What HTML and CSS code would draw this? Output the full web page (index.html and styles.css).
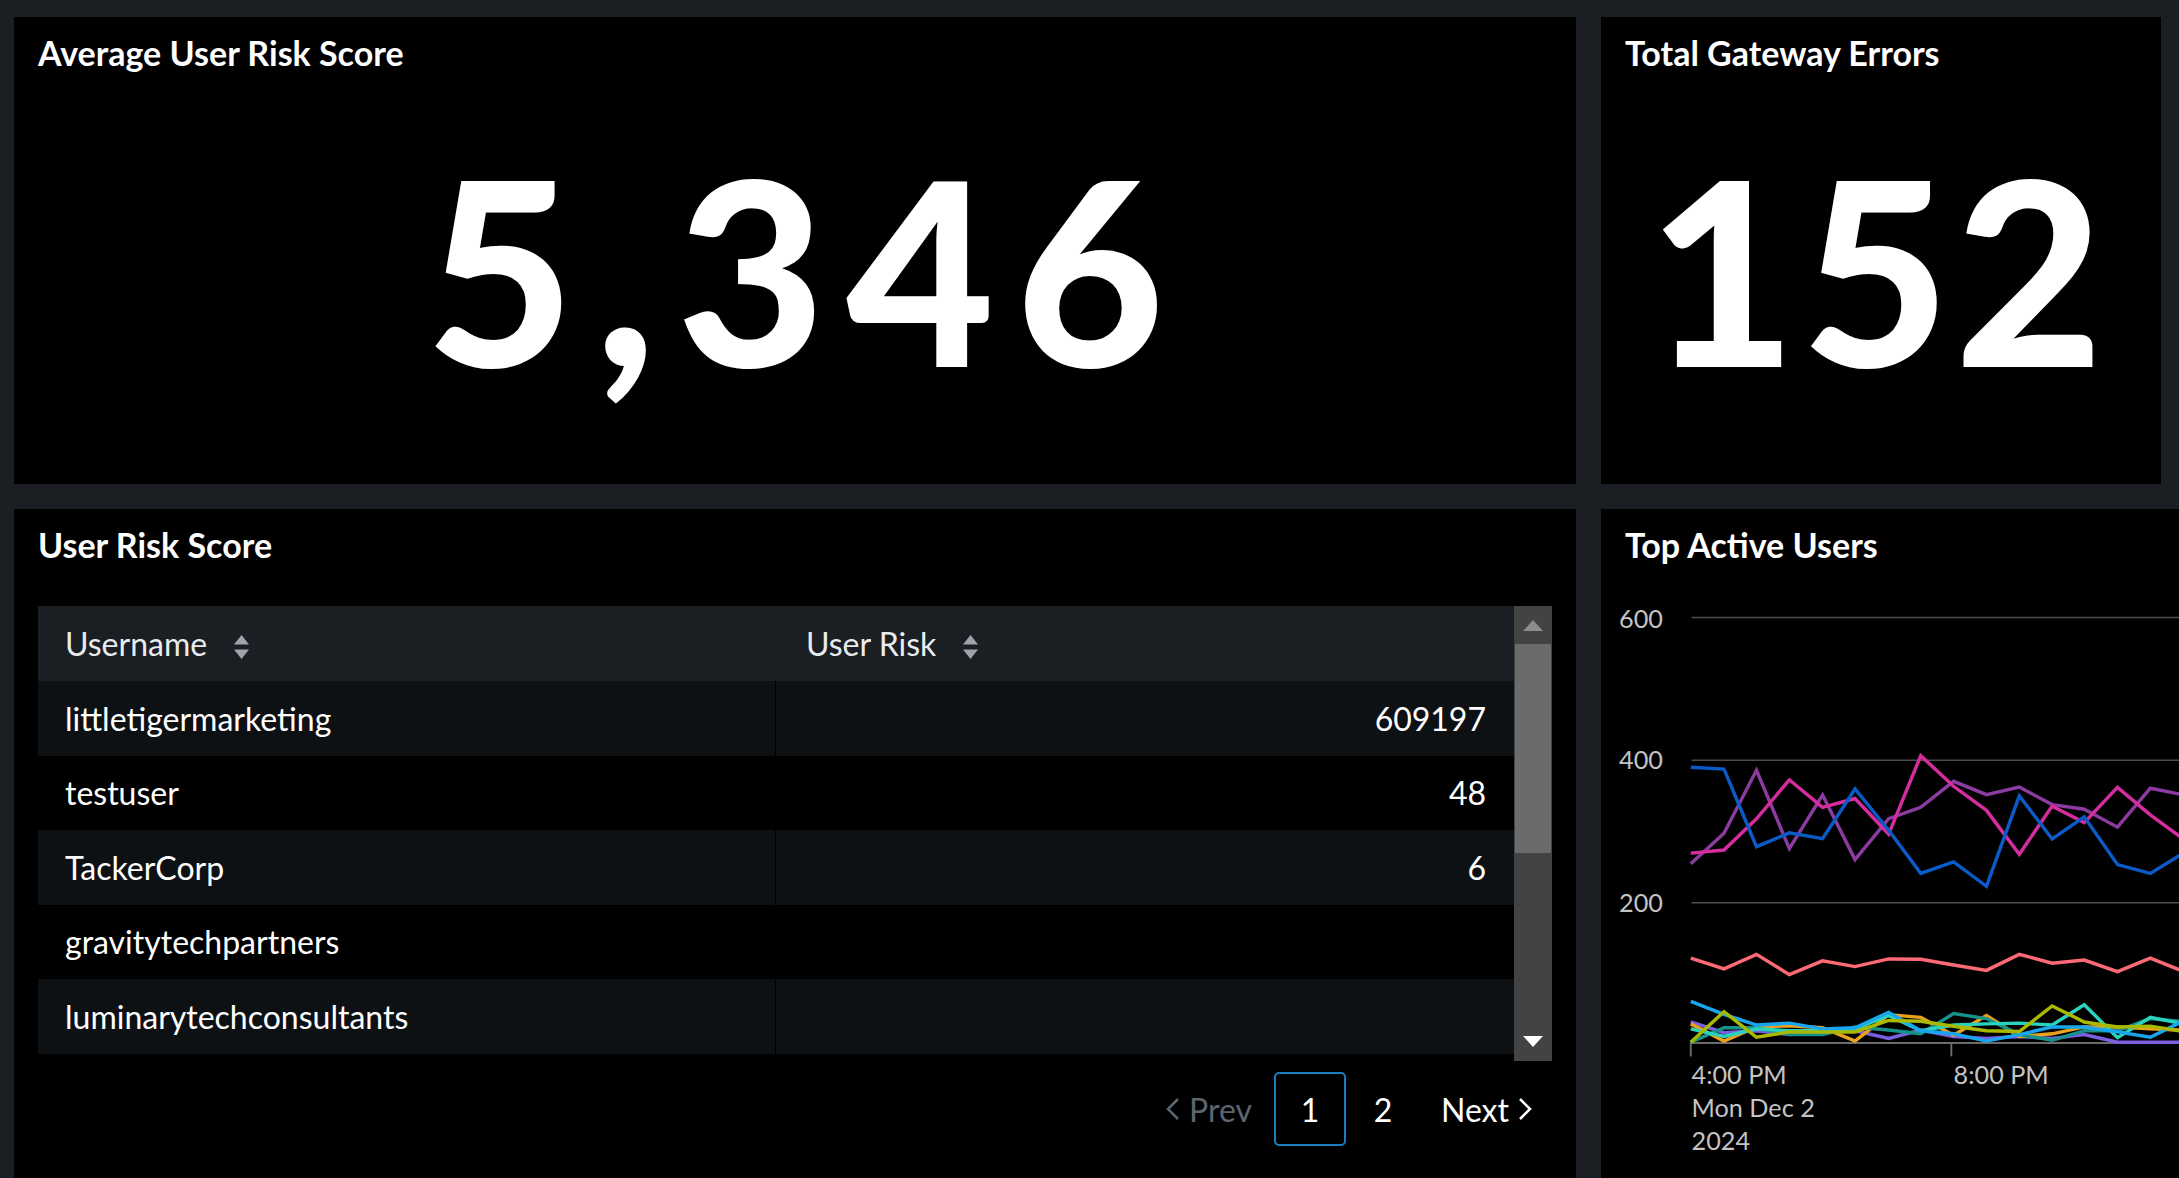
FILE: index.html
```html
<!DOCTYPE html>
<html lang="en">

<head>
    <meta charset="UTF-8">
    <meta name="viewport" content="width=device-width, initial-scale=1.0">
    <title>Risk Dashboard</title>
    <link rel="stylesheet" href="styles.css">
</head>

<body>
    <div id="dash">
        <section class="panel">
            <h2 class="panel-title">Average User Risk Score</h2>
            <div class="single-value">5,346</div>
        </section>

        <section class="panel panel-small">
            <h2 class="panel-title">Total Gateway Errors</h2>
            <div class="single-value">152</div>
        </section>

        <section class="panel">
            <h2 class="panel-title">User Risk Score</h2>
            <div class="table-box">
                <table class="risk-table">
                    <thead>
                        <tr>
                            <th class="col-user">Username<svg class="sort" viewBox="0 0 17 24"><path d="M8.5 0L16 9.5H1z M8.5 24L16 14.5H1z"/></svg></th>
                            <th class="col-risk">User Risk<svg class="sort" viewBox="0 0 17 24"><path d="M8.5 0L16 9.5H1z M8.5 24L16 14.5H1z"/></svg></th>
                        </tr>
                    </thead>
                    <tbody>
                        <tr><td>littletigermarketing</td><td class="num">609197</td></tr>
                        <tr><td>testuser</td><td class="num">48</td></tr>
                        <tr><td>TackerCorp</td><td class="num">6</td></tr>
                        <tr><td>gravitytechpartners</td><td class="num"></td></tr>
                        <tr><td>luminarytechconsultants</td><td class="num"></td></tr>
                    </tbody>
                </table>
                <div class="scrollbar">
                    <div class="scroll-btn"><span class="arrow-up"></span></div>
                    <div class="scroll-thumb"></div>
                    <div class="scroll-rest"></div>
                    <div class="scroll-btn scroll-btn-down"><span class="arrow-down"></span></div>
                </div>
            </div>
            <div class="pager">
                <span class="pg-prev"><svg class="chev" viewBox="0 0 15 22"><polyline points="13,1 3,11 13,21"/></svg>Prev</span>
                <span class="pg-page active">1</span>
                <span class="pg-page">2</span>
                <span class="pg-next">Next<svg class="chev" viewBox="0 0 15 22"><polyline points="2,1 12,11 2,21"/></svg></span>
            </div>
        </section>

        <section class="panel panel-chart">
            <h2 class="panel-title">Top Active Users</h2>
            <svg class="chart" width="600" height="620">
                <g transform="translate(-21 15) scale(0.382)">
                    <!-- grid -->
                    <g class="grid">
                        <line x1="292" y1="98" x2="1700" y2="98"/>
                        <line x1="292" y1="472" x2="1700" y2="472"/>
                        <line x1="292" y1="845" x2="1700" y2="845"/>
                    </g>
                    <g class="axis">
                        <line x1="288" y1="1212" x2="1700" y2="1212"/>
                        <line x1="290" y1="1212" x2="290" y2="1247"/>
                        <line x1="972" y1="1212" x2="972" y2="1247"/>
                    </g>
                    <g class="labels">
                        <text x="217" y="125" text-anchor="end">600</text>
                        <text x="217" y="494" text-anchor="end">400</text>
                        <text x="217" y="869" text-anchor="end">200</text>
                        <text x="292" y="1320">4:00 PM</text>
                        <text x="292" y="1407">Mon Dec 2</text>
                        <text x="292" y="1492">2024</text>
                        <text x="978" y="1320">8:00 PM</text>
                    </g>
                    <!-- series -->
                    <g class="series">
                        <polyline stroke="#7a5fe0" points="290,1157 377,1185 462,1180 548,1190 635,1185 720,1180 808,1200 892,1178 978,1195 1064,1200 1150,1195 1236,1200 1320,1190 1407,1210 1493,1210 1568,1210 1654,1208"/>
                        <polyline stroke="#e9a21e" points="290,1162 377,1207 462,1170 548,1167 635,1172 720,1207 808,1138 892,1145 978,1192 1064,1140 1150,1195 1236,1188 1320,1170 1407,1170 1493,1175 1568,1178 1654,1172"/>
                        <polyline stroke="#16928a" points="290,1210 377,1172 462,1172 548,1190 635,1190 720,1170 808,1178 892,1188 978,1135 1064,1148 1150,1190 1236,1205 1320,1180 1407,1180 1493,1148 1568,1155 1654,1160"/>
                        <polyline stroke="#2ad3bd" points="290,1175 377,1195 462,1175 548,1180 635,1180 720,1175 808,1140 892,1180 978,1165 1064,1162 1150,1160 1236,1165 1320,1112 1407,1198 1493,1145 1568,1160 1654,1150"/>
                        <polyline stroke="#18a6ee" points="290,1103 377,1137 462,1165 548,1160 635,1175 720,1172 808,1132 892,1180 978,1188 1064,1207 1150,1190 1236,1170 1320,1170 1407,1183 1493,1197 1568,1160 1654,1170"/>
                        <polyline stroke="#a9b800" points="290,1210 377,1130 462,1197 548,1183 635,1183 720,1183 808,1153 892,1155 978,1168 1064,1180 1150,1182 1236,1115 1320,1157 1407,1170 1493,1168 1568,1180 1654,1175"/>
                        <polyline stroke="#fd6a76" points="290,990 377,1018 462,980 548,1033 635,997 720,1012 808,992 892,993 978,1008 1064,1022 1150,980 1236,1003 1320,995 1407,1025 1493,990 1568,1020 1654,1000"/>
                        <polyline stroke="#8c3ba0" points="290,743 377,663 462,498 548,703 635,563 720,732 808,625 892,595 978,527 1064,562 1150,542 1236,588 1320,600 1407,647 1493,545 1568,560 1654,580"/>
                        <polyline stroke="#d52d9e" points="290,715 377,707 462,625 548,523 635,595 720,572 808,665 892,460 978,540 1064,603 1150,718 1236,592 1320,635 1407,543 1493,615 1568,670 1654,640"/>
                        <polyline stroke="#0a5ac8" points="290,490 377,495 462,698 548,662 635,677 720,547 808,655 892,768 978,738 1064,802 1150,565 1236,678 1320,620 1407,745 1493,768 1568,722 1654,700"/>
                    </g>
                </g>
            </svg>
        </section>
    </div>
</body>

</html>
```

FILE: styles.css
```css
* {
    box-sizing: border-box;
    margin: 0;
    padding: 0;
}

html, body {
    height: 100%;
    overflow: hidden;
    background: #1b1e23;
}

body {
    font-family: Lato, "Noto Sans", sans-serif;
    color: #fff;
}

#dash {
    display: grid;
    grid-template-columns: 1562px 600px;
    grid-template-rows: 467px 700px;
    gap: 25px;
    padding: 17px 0 0 14px;
}

.panel {
    background: #000;
    padding: 16px 24px;
    display: flex;
    flex-direction: column;
}

.panel-small {
    width: 560px;
}

.panel-title {
    font-size: 34px;
    font-weight: 700;
    line-height: 40px;
}

/* big numbers */
.single-value {
    flex: 1;
    display: flex;
    align-items: center;
    justify-content: center;
    padding-bottom: 6px;
    padding-left: 21px;
    font-size: 256px;
    font-weight: 900;
    line-height: 1;
    letter-spacing: 21px;
}

.panel-small .single-value {
    padding-left: 0;
    padding-right: 6px;
    letter-spacing: 5px;
}

/* table */
.table-box {
    display: flex;
    height: 455px;
    margin-top: 41px;
}

.risk-table {
    flex: 1;
    align-self: flex-start;
    border-collapse: collapse;
    font-size: 32px;
}

.risk-table th {
    background: #1b1e23;
    height: 75px;
    font-weight: 400;
    text-align: left;
    color: #e9ecef;
    white-space: nowrap;
}

.risk-table th.col-user {
    width: 737px;
    padding: 0 27px;
}

.risk-table th.col-risk {
    padding: 0 31px;
}

.sort {
    width: 17px;
    height: 24px;
    margin-left: 26px;
    vertical-align: -3px;
    fill: #9ea3ac;
}

.risk-table td {
    height: 74.5px;
    padding: 0 27px;
}

.risk-table tbody tr:nth-child(odd) td {
    background: #0e1114;
}

.risk-table td.num {
    text-align: right;
    padding-right: 28px;
    border-left: 1px solid #000;
}

.scrollbar {
    width: 38px;
    background: #434343;
    display: flex;
    flex-direction: column;
}

.scroll-btn {
    height: 38px;
    display: flex;
    align-items: center;
    justify-content: center;
}

.scroll-btn-down {
    height: 40px;
}

.arrow-up {
    border-left: 10px solid transparent;
    border-right: 10px solid transparent;
    border-bottom: 11px solid #8c8c8c;
}

.arrow-down {
    border-left: 10px solid transparent;
    border-right: 10px solid transparent;
    border-top: 11px solid #fff;
}

.scroll-thumb {
    height: 209px;
    margin: 0 1px;
    background: #6b6b6b;
}

.scroll-rest {
    flex: 1;
}

/* pagination */
.pager {
    display: flex;
    justify-content: flex-end;
    align-items: center;
    gap: 1px;
    margin-top: 11px;
    padding-right: 19px;
    font-size: 32px;
}

.pg-prev, .pg-next {
    display: flex;
    align-items: center;
    gap: 9px;
}

.pg-prev {
    color: #5c6670;
    margin-right: 21px;
}

.pg-next {
    margin-left: 21px;
}

.chev {
    width: 15px;
    height: 22px;
    fill: none;
    stroke: currentColor;
    stroke-width: 2.5;
}

.pg-page {
    width: 72px;
    height: 74px;
    display: flex;
    align-items: center;
    justify-content: center;
    border: 2px solid transparent;
    border-radius: 5px;
}

.pg-page.active {
    border-color: #1a7fc1;
}

/* chart */
.chart {
    display: block;
    margin-left: -24px;
    overflow: hidden;
}

.grid line {
    stroke: #4d4d4d;
    stroke-width: 4;
}

.axis line {
    stroke: #6b6b6b;
    stroke-width: 5;
}

.labels text {
    fill: #c3c3c3;
    font-family: Lato, "Noto Sans", sans-serif;
    font-size: 66px;
}

.series polyline {
    fill: none;
    stroke-width: 9;
    stroke-linejoin: miter;
}
```
